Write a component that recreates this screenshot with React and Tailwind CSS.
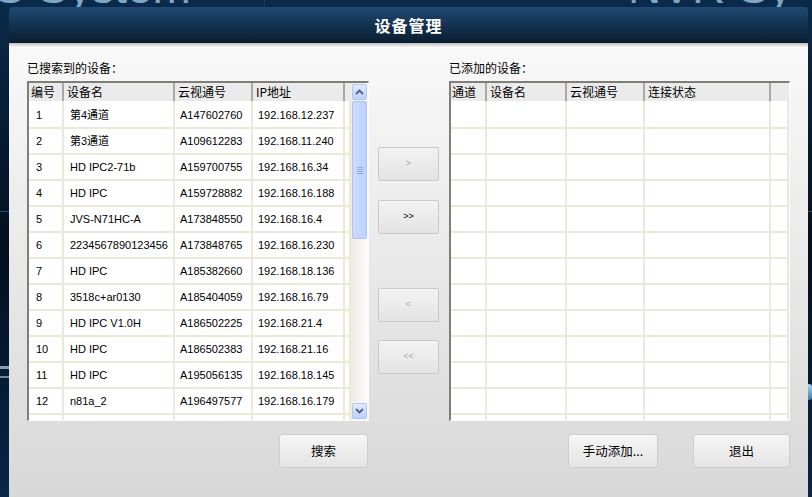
import React from 'react'

const cjk = { fontFamily: "'Noto Sans CJK SC', 'Liberation Sans', sans-serif" }
const latin = { fontFamily: "'Liberation Sans', 'Noto Sans CJK SC', sans-serif" }

const found = [
  ['1', '第4通道', 'A147602760', '192.168.12.237'],
  ['2', '第3通道', 'A109612283', '192.168.11.240'],
  ['3', 'HD IPC2-71b', 'A159700755', '192.168.16.34'],
  ['4', 'HD IPC', 'A159728882', '192.168.16.188'],
  ['5', 'JVS-N71HC-A', 'A173848550', '192.168.16.4'],
  ['6', '2234567890123456', 'A173848765', '192.168.16.230'],
  ['7', 'HD IPC', 'A185382660', '192.168.18.136'],
  ['8', '3518c+ar0130', 'A185404059', '192.168.16.79'],
  ['9', 'HD IPC V1.0H', 'A186502225', '192.168.21.4'],
  ['10', 'HD IPC', 'A186502383', '192.168.21.16'],
  ['11', 'HD IPC', 'A195056135', '192.168.18.145'],
  ['12', 'n81a_2', 'A196497577', '192.168.16.179'],
  ['', '', '', ''],
]

const leftCols = [
  { w: 'w-[35px]', label: '编号', pad: 'pl-[7px]' },
  { w: 'w-[111px]', label: '设备名', pad: 'pl-[6px]' },
  { w: 'w-[78px]', label: '云视通号', pad: 'pl-[5px]' },
  { w: 'w-[92px]', label: 'IP地址', pad: 'pl-[5px]' },
  { w: 'w-[6px]', label: '', pad: '' },
]

const rightCols = [
  { w: 'w-[36px]', label: '通道' },
  { w: 'w-[80px]', label: '设备名' },
  { w: 'w-[78px]', label: '云视通号' },
  { w: 'w-[126px]', label: '连接状态' },
  { w: 'w-[18px]', label: '' },
]

function Chevron({ up }) {
  return (
    <svg width="9" height="6" viewBox="0 0 9 6">
      <polyline
        points={up ? '1,5 4.5,1.5 8,5' : '1,1 4.5,4.5 8,1'}
        fill="none"
        stroke="#4d6185"
        strokeWidth="1.8"
      />
    </svg>
  )
}

function ScrollBar() {
  return (
    <div className="w-[17px] h-full flex flex-col px-[1px] pt-[1px] pb-[1px] bg-gradient-to-r from-[#eeede6] to-[#fcfcfa]">
      <div className="h-[16px] rounded-[2px] border border-[#b3c6f2] bg-gradient-to-b from-[#e4ecfe] to-[#bcd0fb] flex items-center justify-center">
        <Chevron up />
      </div>
      <div className="h-[138px] mt-[1px] rounded-[2px] border border-[#aec3f3] bg-gradient-to-r from-[#cddcfd] to-[#bdd0fb] flex flex-col items-center justify-center gap-[1px]">
        {[0, 1, 2, 3].map((i) => (
          <div key={i} className="w-[6px] h-[1px] bg-[#8ea8e2]" />
        ))}
      </div>
      <div className="flex-1" />
      <div className="h-[16px] rounded-[2px] border border-[#b3c6f2] bg-gradient-to-b from-[#e4ecfe] to-[#bcd0fb] flex items-center justify-center">
        <Chevron />
      </div>
    </div>
  )
}

function HeaderRow({ cols, padFirst }) {
  return (
    <div className="h-[18px] flex bg-[#ebebeb] text-[12px] text-black shrink-0" style={cjk}>
      {cols.map((c, i) => (
        <div
          key={i}
          className={`${c.w} h-full flex items-center ${i < cols.length - 1 ? 'border-r-2 border-[#a9a9a9]' : ''} ${i === 0 ? padFirst : 'pl-[3px]'}`}
        >
          {c.label}
        </div>
      ))}
    </div>
  )
}

// thin white strip under the header, with the grid's column lines running through
function HeaderGap({ cols }) {
  return (
    <div className="h-[2px] flex shrink-0">
      {cols.map((c, i) => (
        <div key={i} className={`${c.w} h-full border-r-2 border-[#ece9d8]`} />
      ))}
    </div>
  )
}

function FoundTable() {
  return (
    <div className="w-[342px] h-[340px] bg-white flex overflow-hidden border-t-2 border-l-2 border-r border-b border-t-[#7f7f77] border-l-[#7f7f77] border-r-[#fbfbfb] border-b-[#fbfbfb]">
      <div className="w-[322px] flex flex-col overflow-hidden">
        <HeaderRow cols={leftCols} padFirst="pl-[2px]" />
        <HeaderGap cols={leftCols} />
        {found.map((r, ri) => (
          <div key={ri} className="h-[26px] flex shrink-0 border-b-2 border-[#ece9d8] text-[11px] text-black" style={latin}>
            {leftCols.map((c, ci) => (
              <div
                key={ci}
                className={`${c.w} h-full flex items-center border-r-2 border-[#ece9d8] whitespace-nowrap overflow-hidden ${c.pad}`}
              >
                {r[ci] || ''}
              </div>
            ))}
          </div>
        ))}
      </div>
      <ScrollBar />
    </div>
  )
}

function AddedTable() {
  return (
    <div className="w-[341px] h-[340px] bg-white flex flex-col overflow-hidden border-t-2 border-l-2 border-r border-b border-t-[#7f7f77] border-l-[#7f7f77] border-r-[#fbfbfb] border-b-[#fbfbfb]">
      <HeaderRow cols={rightCols} padFirst="pl-[1px]" />
      <HeaderGap cols={rightCols} />
      {found.map((r, ri) => (
        <div key={ri} className="h-[26px] flex shrink-0 border-b-2 border-[#ece9d8]">
          {rightCols.map((c, ci) => (
            <div key={ci} className={`${c.w} h-full border-r-2 border-[#ece9d8]`} />
          ))}
        </div>
      ))}
    </div>
  )
}

function MoveButton({ label, enabled, className = '' }) {
  return (
    <div
      className={`w-[61px] h-[34px] rounded-[2px] border border-[#c9c9c9] bg-gradient-to-b from-[#f3f3f3] to-[#e3e3e3] flex items-center justify-center text-[9px] ${enabled ? 'text-black' : 'text-[#a8a8a8]'} ${className}`}
      style={latin}
    >
      {label}
    </div>
  )
}

function Button({ label, w }) {
  return (
    <button
      className={`${w} h-[34px] rounded-[3px] border border-[#cdcdcd] bg-gradient-to-b from-[#f6f6f6] to-[#e4e4e4] flex items-center justify-center text-[12.5px] text-black`}
      style={cjk}
    >
      {label}
    </button>
  )
}

export default function App() {
  return (
    <div className="relative w-[812px] h-[497px] overflow-hidden bg-gradient-to-b from-[#0b2a4a] via-[#03101f] to-[#082648]">
      {/* desktop behind the dialog */}
      <div className="absolute inset-x-0 top-0 h-[8px] overflow-hidden">
        <div className="absolute left-[-6px] top-[-36px] text-[46px] leading-none text-[#7ea6c4] whitespace-nowrap" style={latin}>
          S System
        </div>
        <div className="absolute left-[628px] top-[-36px] text-[46px] leading-none text-[#7ea6c4] whitespace-nowrap" style={latin}>
          NVR Sy
        </div>
      </div>
      <div className="absolute left-[264px] top-0 w-[1px] h-[8px] bg-[#1c3b5c]" />
      <div className="absolute left-0 top-[211px] w-full h-[1px] bg-[#1f4f7e]" />
      <div className="absolute left-0 top-[366px] w-[10px] h-[3px] bg-[#8aa0b2]" />
      <div className="absolute left-0 top-[376px] w-[10px] h-[2px] bg-[#6d879c]" />
      <div className="absolute left-[806px] top-[384px] w-[6px] h-[16px] rounded-full bg-gradient-to-b from-[#a9d4ef] to-[#3e7fae]" />

      <div className="relative pt-[7px] pl-[9px]">
        <div className="w-[799px] h-[490px] flex flex-col">
          {/* title */}
          <div className="h-[36px] rounded-t-[4px] bg-gradient-to-b from-[#1f4a73] to-[#0a1d2f] flex items-center justify-center">
            <span className="text-white text-[16px] font-bold tracking-[1px]" style={cjk}>
              设备管理
            </span>
          </div>
          <div className="flex-1 flex flex-col bg-gradient-to-b from-[#f9f9f9] to-[#d8d8d8]">
            <div className="h-[4px] bg-gradient-to-b from-[#bdbdbd] to-[#f8f8f8]" />
            <div className="flex items-start pl-[18px] pt-[13px]">
              {/* left panel */}
              <div className="w-[342px] flex flex-col">
                <div className="h-[21px] pb-[5px] flex items-center text-[12px] text-black" style={cjk}>
                  已搜索到的设备：
                </div>
                <FoundTable />
                <div className="flex justify-end mt-[13px] pr-[1px]">
                  <Button label="搜索" w="w-[89px]" />
                </div>
              </div>

              {/* middle arrows */}
              <div className="ml-[9px] w-[61px] flex flex-col mt-[87px]">
                <MoveButton label=">" />
                <MoveButton label=">>" enabled className="mt-[19px]" />
                <MoveButton label="<" className="mt-[54px]" />
                <MoveButton label="<<" className="mt-[18px]" />
              </div>

              {/* right panel */}
              <div className="ml-[10px] w-[341px] flex flex-col">
                <div className="h-[21px] pb-[5px] flex items-center text-[12px] text-black" style={cjk}>
                  已添加的设备：
                </div>
                <AddedTable />
                <div className="flex justify-end gap-[35px] mt-[13px]">
                  <Button label="手动添加..." w="w-[90px]" />
                  <Button label="退出" w="w-[97px]" />
                </div>
              </div>
            </div>
          </div>
        </div>
      </div>
    </div>
  )
}
